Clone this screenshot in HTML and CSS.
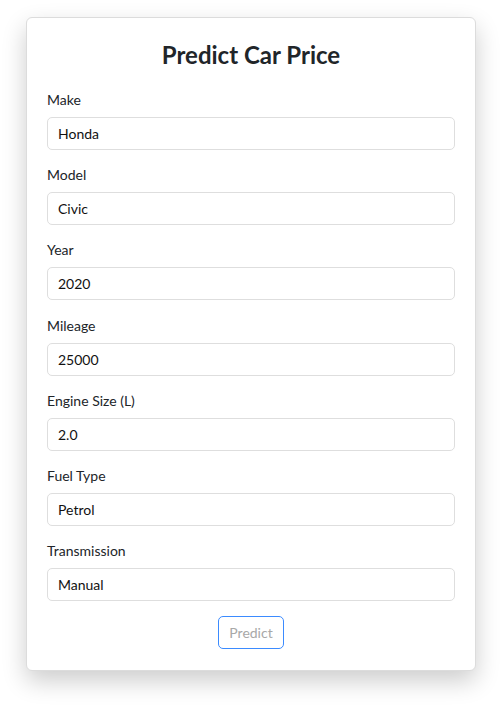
FILE: index.html
```html
<!DOCTYPE html>
<html>
<head>
<meta charset="utf-8">
<link rel="stylesheet" href="styles.css">
</head>
<body>
<div class="card">
  <h2 class="title">Predict Car Price</h2>
  <div class="field"><label class="label">Make</label><input class="input" value="Honda"></div>
  <div class="field"><label class="label">Model</label><input class="input" value="Civic"></div>
  <div class="field"><label class="label">Year</label><input class="input" value="2020"></div>
  <div class="field"><label class="label">Mileage</label><input class="input" value="25000"></div>
  <div class="field"><label class="label">Engine Size (L)</label><input class="input" value="2.0"></div>
  <div class="field"><label class="label">Fuel Type</label><input class="input" value="Petrol"></div>
  <div class="field last"><label class="label">Transmission</label><input class="input" value="Manual"></div>
  <div class="actions"><button class="btn">Predict</button></div>
</div>
</body>
</html>
```
FILE: styles.css
```css
html, body {
  margin: 0;
  padding: 0;
  background: #fff;
}
body {
  padding: 17px 0 40px 0;
  font-family: Lato, "Open Sans", sans-serif;
  color: #212529;
}
.card {
  box-sizing: border-box;
  width: 450px;
  margin: 0 0 0 26px;
  border: 1px solid #dcdcdc;
  border-radius: 6px;
  background: #fff;
  padding: 22px 20px 21px 20px;
  box-shadow: 0 10px 24px rgba(0,0,0,0.2);
}
.title {
  margin: 0 0 20px 0;
  text-align: center;
  font-size: 24px;
  line-height: 29px;
  font-weight: 700;
  color: #212529;
}
.field {
  display: flex;
  flex-direction: column;
  gap: 7px;
  margin-bottom: 14.2px;
}
.field.last {
  margin-bottom: 15px;
}
.label {
  font-size: 14px;
  line-height: 21px;
  color: #212529;
}
.input {
  box-sizing: border-box;
  width: 100%;
  height: 33px;
  border: 1px solid #dedede;
  border-radius: 5px;
  padding: 0 10px;
  font-family: inherit;
  font-size: 14px;
  color: #111;
  background: #fff;
  outline: none;
}
.actions {
  display: flex;
  justify-content: center;
}
.btn {
  box-sizing: border-box;
  height: 33px;
  width: 66px;
  border: 1px solid #3b8bff;
  border-radius: 5px;
  background: #fff;
  color: #a8a8a8;
  font-family: inherit;
  font-size: 14px;
  padding: 0;
}
```
